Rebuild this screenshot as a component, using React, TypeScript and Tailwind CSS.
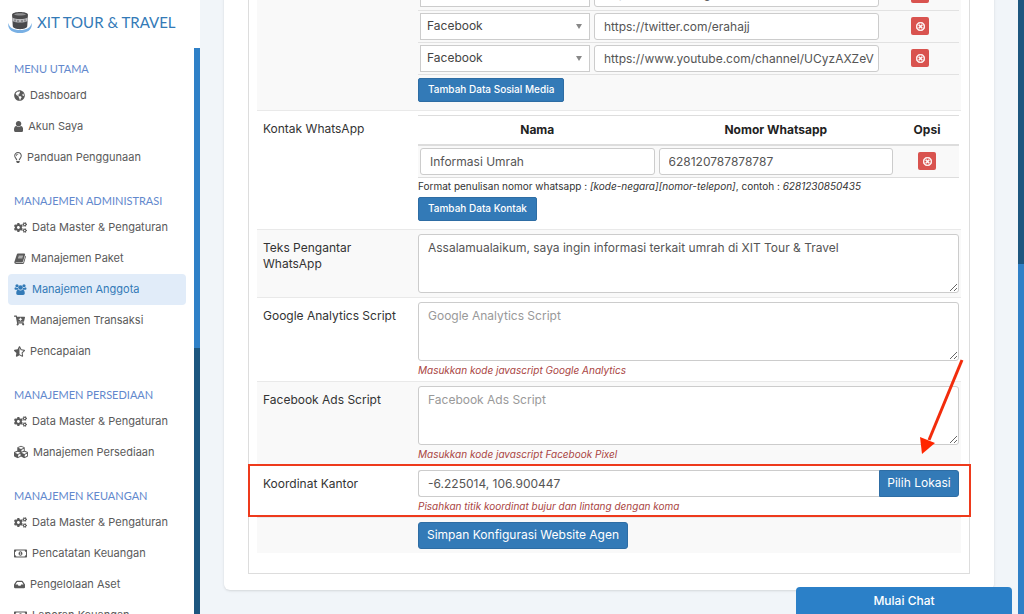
import type { ReactNode } from 'react'
import {
  FaCartPlus,
  FaCogs,
  FaCubes,
  FaGlobeAmericas,
  FaInbox,
  FaRegLightbulb,
  FaRegMoneyBillAlt,
  FaRegTimesCircle,
  FaStarHalfAlt,
} from 'react-icons/fa'

type IconProps = { className?: string }

function UserIcon({ className }: IconProps) {
  return (
    <svg viewBox="256 128 1280 1536" fill="currentColor" className={className} aria-hidden="true">
      <path d="M1536 1399q0 109-62.5 187t-150.5 78h-854q-88 0-150.5-78t-62.5-187q0-85 8.5-160.5t31.5-152 58.5-131 94-89 134.5-34.5q131 128 313 128t313-128q76 0 134.5 34.5t94 89 58.5 131 31.5 152 8.5 160.5zm-256-887q0 159-112.5 271.5t-271.5 112.5-271.5-112.5-112.5-271.5 112.5-271.5 271.5-112.5 271.5 112.5 112.5 271.5z" />
    </svg>
  )
}

function UsersIcon({ className }: IconProps) {
  return (
    <svg viewBox="0 0 24 22" fill="currentColor" className={className} aria-hidden="true">
      <circle cx="5" cy="3.5" r="3.2" />
      <circle cx="19" cy="3.5" r="3.2" />
      <circle cx="12" cy="7" r="4.6" />
      <path d="M1.8 6.5c2 1.6 4 1.6 5 .8 0 2 .6 3.300 1.600 4.200H2.500C.8 11.500 0 10.500 0 9.500s.6-3 1.800-3zM22.200 6.500c-2 1.600-4 1.600-5 .8 0 2-.6 3.300-1.600 4.200h5.900c1.700 0 2.500-1 2.500-2s-.6-3-1.800-3z" />
      <path d="M7.500 11.500c3 2.200 6 2.200 9 0 2.800 0 4 3 4 7 0 2-1.300 3.500-3.200 3.500H6.700c-1.900 0-3.200-1.500-3.200-3.500 0-4 1.200-7 4-7z" />
    </svg>
  )
}

function BookIcon({ className }: IconProps) {
  return (
    <svg viewBox="0 0 22 20" className={className} aria-hidden="true">
      <path
        fill="currentColor"
        fillRule="evenodd"
        d="M8 1h10.500c1.500 0 2 1 1.600 2.300L16.600 15c-.4 1.300-1.200 1.800-2.400 1.800H3.600c-.8 0-.8 1 .2 1H15.500c.8 0 1.300-.4 1.600-1.200l3.500-11.400c1 .5 1.200 1.300.9 2.200l-3 10.300c-.4 1.400-1.500 2.300-3 2.300H4C1.500 20 0 18 .8 15.800L4.800 3.500C5.400 1.800 6.300 1 8 1zM8.500 5l-.4 1.300h8L16.500 5zM7.600 8.200l-.4 1.300h8l.4-1.300z"
      />
    </svg>
  )
}

type MenuItem = { label: string; icon: (props: IconProps) => ReactNode; size?: string; active?: boolean }

const MENU: { title: string; items: MenuItem[] }[] = [
  {
    title: 'MENU UTAMA',
    items: [
      { label: 'Dashboard', icon: FaGlobeAmericas },
      { label: 'Akun Saya', icon: UserIcon },
      { label: 'Panduan Penggunaan', icon: FaRegLightbulb, size: 'h-[11px] w-2' },
    ],
  },
  {
    title: 'MANAJEMEN ADMINISTRASI',
    items: [
      { label: 'Data Master & Pengaturan', icon: FaCogs, size: 'h-[11px] w-[13px]' },
      { label: 'Manajemen Paket', icon: BookIcon },
      { label: 'Manajemen Anggota', icon: UsersIcon, size: 'h-[11px] w-[13px]', active: true },
      { label: 'Manajemen Transaksi', icon: FaCartPlus },
      { label: 'Pencapaian', icon: FaStarHalfAlt },
    ],
  },
  {
    title: 'MANAJEMEN PERSEDIAAN',
    items: [
      { label: 'Data Master & Pengaturan', icon: FaCogs, size: 'h-[11px] w-[13px]' },
      { label: 'Manajemen Persediaan', icon: FaCubes, size: 'size-[14px]' },
    ],
  },
  {
    title: 'MANAJEMEN KEUANGAN',
    items: [
      { label: 'Data Master & Pengaturan', icon: FaCogs, size: 'h-[11px] w-[13px]' },
      { label: 'Pencatatan Keuangan', icon: FaRegMoneyBillAlt, size: 'h-[11px] w-[13px]' },
      { label: 'Pengelolaan Aset', icon: FaInbox },
      { label: 'Laporan Keuangan', icon: FaRegMoneyBillAlt, size: 'h-[11px] w-[13px]' },
    ],
  },
]

const SOCIALS = [
  'https://www.instagram.com/erahajj.co.id/',
  'https://twitter.com/erahajj',
  'https://www.youtube.com/channel/UCyzAXZeV',
]

const INPUT =
  'block h-[27px] w-full rounded-[3px] border border-[#cccccc] bg-white pr-1 pl-[9px] text-[#555555] outline-none'
const TEXTAREA =
  'block h-[59px] w-full resize rounded-[3px] border border-[#cccccc] bg-white px-[9px] py-[5px] leading-4 text-[#555555] outline-none placeholder:text-[#999999]'

function Logo() {
  return (
    <svg viewBox="0 0 24 24" className="size-6" aria-hidden="true">
      <path d="M.5 13c-1.500 6 4 10 11.500 10s13-4 11.500-10c-.5 4.500-5 7-11.500 7S1 17.500.5 13z" fill="#79b0e4" />
      <path d="M4 4.500C4.500 1 19.500 1 20 4.500l-.8 12c-1 3.500-13.400 3.500-14.400 0z" fill="#4a4a4c" />
      <path d="M6 4.500c2-1.800 10-1.800 12 0-2 1.400-10 1.400-12 0z" fill="#8e8e90" />
      <path d="M4.200 7.500c4 2 11.600 2 15.600 0l-.2 3.500c-4 2-11.200 2-15.200 0z" fill="#b9b9bc" />
      <path d="M7 9.500v2M10 10v2M14 10v2M17 9.500v2" stroke="#5a5a5c" />
    </svg>
  )
}

function Sidebar() {
  return (
    <aside className="flex h-full w-[200px] shrink-0 flex-col bg-white">
      <a href="#" className="flex h-12 shrink-0 items-center gap-[5px] px-2 pb-1 font-['Lato',sans-serif] text-[15px] text-[#337ab7]">
        <Logo />
        XIT TOUR &amp; TRAVEL
      </a>
      <div className="flex min-h-0 flex-1">
        <nav className="flex-1 overflow-hidden px-2 text-[11px]">
          {MENU.map((group) => (
            <section key={group.title} className="pt-[17px] first:pt-[10px]">
              <h2 className="mb-px h-[21px] px-[6px] font-['Lato',sans-serif] text-[11px] leading-[21px] whitespace-nowrap text-[#6288cd]">
                {group.title}
              </h2>
              {group.items.map(({ label, icon: Icon, size, active }) => (
                <a
                  key={label}
                  href="#"
                  className={
                    active
                      ? 'flex h-[31px] items-center gap-[5px] rounded-[4px] bg-[#e1ecf9] px-[6px] pb-px text-[#337ab7]'
                      : 'flex h-[31px] items-center gap-[5px] px-[6px] pb-px text-[#5a5a5a]'
                  }
                >
                  <Icon className={size ?? 'h-[11px] w-auto shrink-0'} />
                  <span className="whitespace-nowrap">{label}</span>
                </a>
              ))}
            </section>
          ))}
        </nav>
        {/* scrollbar */}
        <div className="w-[6px] bg-[#1d567f]">
          <div className="h-[53%] bg-[#2f80c7]" />
        </div>
      </div>
    </aside>
  )
}

function Row({ label, htmlFor, striped, children }: { label?: string; htmlFor?: string; striped?: boolean; children: ReactNode }) {
  return (
    <div className={striped ? 'flex border-t border-[#e9e9e9] bg-[#f9f9f9]' : 'flex border-t border-[#e9e9e9]'}>
      <label htmlFor={htmlFor} className="w-[161px] shrink-0 pt-[10px] pr-5 pl-[6px] leading-4">
        {label}
      </label>
      <div className="min-w-0 flex-1 py-1 pr-[2px]">{children}</div>
    </div>
  )
}

function Help({ children }: { children: ReactNode }) {
  return <p className="h-4 text-[10px] leading-[18px] text-[#a94442] italic">{children}</p>
}

function DeleteButton() {
  return (
    <button type="button" aria-label="Hapus" className="mx-auto flex size-[18px] items-center justify-center rounded-[2px] bg-[#d9534f] text-white">
      <FaRegTimesCircle className="size-[9px]" stroke="currentColor" strokeWidth="40" />
    </button>
  )
}

function SmallButton({ children }: { children: ReactNode }) {
  return (
    <button type="button" className="block h-6 rounded-[2px] border border-[#2e6da4] bg-[#337ab7] px-[9px] text-[10px] font-medium text-white">
      {children}
    </button>
  )
}

function SocialTable() {
  return (
    <table className="w-full table-fixed border-collapse">
      <colgroup>
        <col className="w-[174px]" />
        <col />
        <col className="w-[78px]" />
      </colgroup>
      <tbody>
        {SOCIALS.map((url) => (
          <tr key={url} className="h-8 border-b border-[#e2e2e2]">
            <td className="px-[2px]">
              <div className="relative">
                <select
                  aria-label="Sosial media"
                  className="block h-[27px] w-full appearance-none border border-[#cccccc] bg-white px-[6px] text-[#444444] outline-none"
                >
                  <option>Facebook</option>
                </select>
                <svg viewBox="0 0 6 5" className="pointer-events-none absolute top-[11px] right-2 h-[5px] w-[6px]">
                  <path d="M0 0h6L3 5z" fill="#888888" />
                </svg>
              </div>
            </td>
            <td className="px-[2px]">
              <input aria-label="Tautan" className={INPUT} defaultValue={url} />
            </td>
            <td>
              <DeleteButton />
            </td>
          </tr>
        ))}
      </tbody>
    </table>
  )
}

function ContactTable() {
  return (
    <table className="w-full table-fixed border-collapse border-y border-[#dddddd]">
      <thead>
        <tr className="h-[30px] border-b-2 border-[#dddddd] text-[#222222]">
          <th>Nama</th>
          <th>Nomor Whatsapp</th>
          <th className="w-[64px]">Opsi</th>
        </tr>
      </thead>
      <tbody>
        <tr className="h-8 bg-[#f9f9f9]">
          <td className="px-[2px]">
            <input aria-label="Nama" className={INPUT} defaultValue="Informasi Umrah" />
          </td>
          <td className="px-[2px]">
            <input aria-label="Nomor Whatsapp" className={INPUT} defaultValue="628120787878787" />
          </td>
          <td>
            <DeleteButton />
          </td>
        </tr>
      </tbody>
    </table>
  )
}

function ConfigForm() {
  return (
    <form className="border border-[#dddddd] px-2 pb-5 text-[#333333]">
      <Row striped>
        <SocialTable />
        <div className="pt-[3px] pb-1">
          <SmallButton>Tambah Data Sosial Media</SmallButton>
        </div>
      </Row>
      <Row label="Kontak WhatsApp">
        <ContactTable />
        <p className="h-4 text-[10px] leading-4 whitespace-nowrap">
          Format penulisan nomor whatsapp : <i>[kode-negara][nomor-telepon]</i>, contoh : <i>6281230850435</i>
        </p>
        <div className="pt-[3px] pb-1">
          <SmallButton>Tambah Data Kontak</SmallButton>
        </div>
      </Row>
      <Row label="Teks Pengantar WhatsApp" htmlFor="intro" striped>
        <textarea
          id="intro"
          className={TEXTAREA}
          defaultValue="Assalamualaikum, saya ingin informasi terkait umrah di XIT Tour & Travel"
        />
      </Row>
      <Row label="Google Analytics Script" htmlFor="analytics">
        <textarea id="analytics" className={TEXTAREA} placeholder="Google Analytics Script" />
        <Help>Masukkan kode javascript Google Analytics</Help>
      </Row>
      <Row label="Facebook Ads Script" htmlFor="ads" striped>
        <textarea id="ads" className={TEXTAREA} placeholder="Facebook Ads Script" />
        <Help>Masukkan kode javascript Facebook Pixel</Help>
      </Row>
      <div className="relative">
        <Row label="Koordinat Kantor" htmlFor="coordinate">
          <div className="flex">
            <input
              id="coordinate"
              className="h-[27px] min-w-0 flex-1 rounded-l-[3px] border border-r-0 border-[#cccccc] bg-white px-[9px] text-[#555555] outline-none"
              defaultValue="-6.225014, 106.900447"
            />
            <button type="button" className="h-[27px] w-20 rounded-r-[3px] border border-[#2e6da4] bg-[#337ab7] text-white">
              Pilih Lokasi
            </button>
          </div>
          <Help>Pisahkan titik koordinat bujur dan lintang dengan koma</Help>
        </Row>
        {/* callout over the coordinate row */}
        <div className="pointer-events-none absolute -top-px -right-[10px] bottom-0 -left-[9px] border-2 border-[#ee3a1c]" />
        <svg viewBox="0 0 46 100" className="pointer-events-none absolute -right-[5px] bottom-[60px] h-[100px] w-[46px]">
          <path d="M42 3L9 83" stroke="#f22c0c" strokeWidth="3" />
          <path d="M0 80L15 86L2 97z" fill="#ff2600" />
        </svg>
      </div>
      <Row striped>
        <button
          type="button"
          className="block h-[27px] rounded-[3px] border border-[#2e6da4] bg-[#337ab7] px-2 text-white"
        >
          Simpan Konfigurasi Website Agen
        </button>
      </Row>
    </form>
  )
}

export default function App() {
  return (
    <div className="flex h-screen overflow-hidden bg-[#f1f5f9] font-['Inter','Open_Sans',sans-serif] text-[12px]">
      <Sidebar />
      <main className="min-w-0 flex-1 overflow-hidden px-6">
        <div className="-mt-7 rounded-[6px] bg-white px-6 pb-4 shadow-sm">
          <ConfigForm />
        </div>
      </main>
      <div className="w-[6px] bg-[#2f80c7]">
        <div className="h-[43%] bg-[#1d567f]" />
      </div>
      <button className="fixed right-3 bottom-0 h-[27px] w-[216px] rounded-t-[4px] bg-[#2b80c8] font-medium text-white">
        Mulai Chat
      </button>
    </div>
  )
}
